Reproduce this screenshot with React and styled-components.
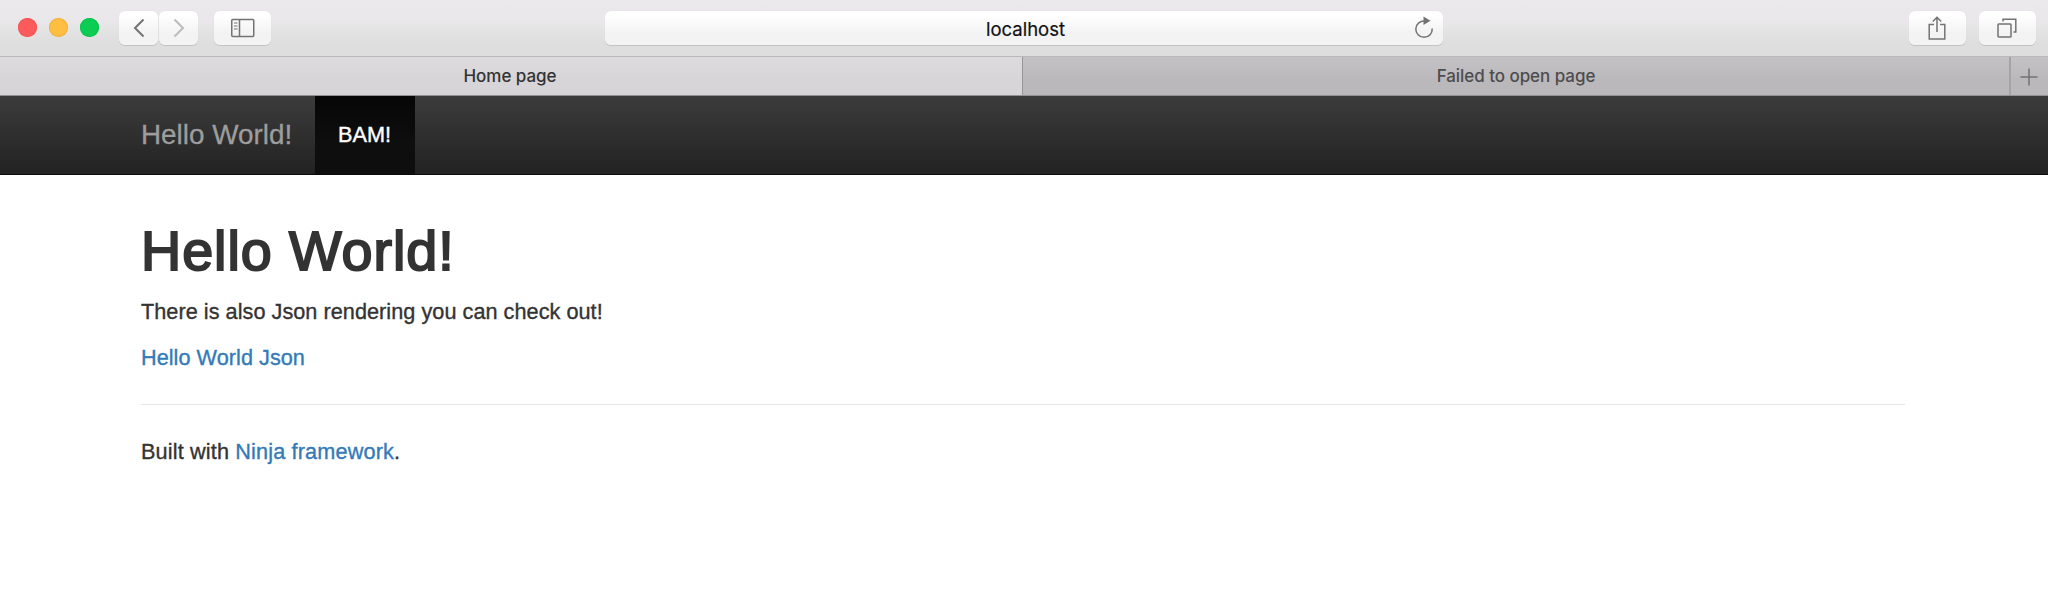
import React from 'react';
import styled, { createGlobalStyle } from 'styled-components';

const GlobalStyle = createGlobalStyle`
  *, *::before, *::after { box-sizing: border-box; }
  body {
    margin: 0;
    background: #fff;
    color: #333;
    font-family: "Liberation Sans", Arial, sans-serif;
    font-size: 21.66px;
  }
`;

const Toolbar = styled.header`
  display: flex;
  align-items: flex-start;
  height: 57px;
  padding: 11px 12px 0 18px;
  background: linear-gradient(#ebe9eb 0%, #e9e7e9 38%, #dedede 78%, #dedede 100%);
  border-bottom: 1px solid #b9b8ba;
`;

const TrafficLights = styled.div`
  display: flex;
  gap: 12px;
  width: 101px;
  padding-top: 7px;
`;

const Light = styled.span`
  width: 19px;
  height: 19px;
  border-radius: 50%;
  background: ${(p) => p.$color};
  box-shadow: inset 0 0 0 1px ${(p) => p.$edge};
`;

const ToolButton = styled.button`
  display: flex;
  align-items: center;
  justify-content: center;
  width: ${(p) => p.$width}px;
  height: 34px;
  margin: 0 ${(p) => p.$after || 0}px 0 0;
  padding: 0 ${(p) => p.$nudge || 0}px 0 0;
  border: 0;
  border-radius: 6px;
  background: linear-gradient(#fff 10%, #f3f3f3 65%);
  box-shadow: 0 0 1px #d4d2d4, 0 1px 0.5px #c2c1c2;
  flex: none;
`;

const Address = styled.div`
  display: flex;
  align-items: center;
  width: 838px;
  height: 34px;
  margin: 0 auto 0 334px;
  padding: 0 8px 0 33px;
  border-radius: 6px;
  background: linear-gradient(#fff 10%, #f3f3f3 65%);
  box-shadow: 0 0 1px #d4d2d4, 0 1px 0.5px #c2c1c2;
  font: 400 18.5px/36px Inter, sans-serif;
  color: #111;
  -webkit-text-stroke: 0.2px;
`;

const Host = styled.span`
  flex: 1;
  height: 34px;
  text-align: center;
`;

const TabBar = styled.nav`
  display: flex;
  height: 39px;
  border-bottom: 1px solid #929194;
  background: #bbb9bc;
`;

const Tab = styled.div`
  width: ${(p) => p.$width}px;
  padding-right: ${(p) => p.$trim || 0}px;
  background: ${(p) => (p.$active ? 'linear-gradient(#dddbde, #d7d5d8 60%)' : 'linear-gradient(#c4c2c5, #bab8bb 60%)')};
  border-right: ${(p) => (p.$active ? 1 : 2)}px solid ${(p) => (p.$active ? '#979699' : '#a5a3a6')};
  text-align: center;
  font: 500 17px/38px Inter, sans-serif;
  letter-spacing: -0.05px;
  color: ${(p) => (p.$active ? '#333' : '#4d4c4e')};
`;

const NewTab = styled.button`
  flex: 1;
  display: flex;
  align-items: center;
  justify-content: center;
  padding: 1px 2px 0 0;
  border: 0;
  background: linear-gradient(#c4c2c5, #bab8bb 60%);
`;

const Navbar = styled.nav`
  display: flex;
  height: 79px;
  padding-left: 141px;
  background: linear-gradient(#3c3c3c, #222);
  border-bottom: 1.5px solid #0b0b0b;
`;

const Brand = styled.a`
  width: 174px;
  font-size: 27.85px;
  line-height: 77px;
  color: #9d9d9d;
  white-space: nowrap;
  -webkit-text-stroke: 0.3px;
`;

const NavItem = styled.a`
  width: 100px;
  padding-right: 1px;
  text-align: center;
  line-height: 77px;
  color: #fff;
  background: linear-gradient(#060606, #0e0e0e 60%);
  -webkit-text-stroke: 0.4px;
`;

const Content = styled.main`
  width: 1764px;
  margin-left: 141px;
  padding-top: 45px;
`;

const Title = styled.h1`
  margin: 0 0 14px;
  font-weight: 400;
  font-size: 55.7px;
  line-height: 62px;
  letter-spacing: 0.95px;
  -webkit-text-stroke: 2px #333;
`;

const Text = styled.p`
  margin: 0 0 15px;
  line-height: 31px;
  letter-spacing: ${(p) => p.$tracking || 0.04}px;
  -webkit-text-stroke: 0.35px;
`;

const Link = styled.a`
  color: #337ab7;
`;

const Rule = styled.hr`
  height: 1px;
  margin: 31px 0;
  border: 0;
  background: #e5e5e5;
`;

const Icon = styled.svg`
  display: block;
  fill: none;
  stroke: ${(p) => p.$color || '#737373'};
  stroke-width: ${(p) => p.$stroke || 1.5};
`;

export default function App() {
  return (
    <>
      <GlobalStyle />
      <Toolbar>
        <TrafficLights>
          <Light $color="#fd5b5b" $edge="#f25656" />
          <Light $color="#febe42" $edge="#f2b340" />
          <Light $color="#0bcd53" $edge="#0cc24f" />
        </TrafficLights>
        <ToolButton $width={39} $after={1} aria-label="Back">
          <Icon width="12" height="20" viewBox="0 0 12 20" $stroke={2}><path d="M10.500 1.500 2 10l8.500 8.500" /></Icon>
        </ToolButton>
        <ToolButton $width={39} $after={16} aria-label="Forward">
          <Icon width="12" height="20" viewBox="0 0 12 20" $stroke={2} $color="#bcbcbc"><path d="M1.500 1.500 10 10l-8.500 8.500" /></Icon>
        </ToolButton>
        <ToolButton $width={57} aria-label="Sidebar">
          <Icon width="24" height="20" viewBox="0 0 24 20">
            <rect x="0.750" y="1.500" width="22" height="17" rx="1" />
            <path d="M8.500 1.500v17" />
            <path d="M3 5h3.500M3 8h3.500M3 11h3.500" strokeWidth="1" />
          </Icon>
        </ToolButton>
        <Address>
          <Host>localhost</Host>
          <Icon width="22" height="24" viewBox="0 0 22 24">
            <path d="M12 5A8.200 8.200 0 1 0 19.200 12.500" />
            <path d="M10.500 0.500 17.500 4.800l-7 4.200z" fill="#737373" stroke="none" />
          </Icon>
        </Address>
        <ToolButton $width={57} $after={13} $nudge={1} aria-label="Share">
          <Icon width="18" height="26" viewBox="0 0 18 26">
            <path d="M6 9.500H1.200V24h15.600V9.500H12M9 17V2.500M4.800 6.500 9 2.300l4.200 4.200" />
          </Icon>
        </ToolButton>
        <ToolButton $width={57} $nudge={1} aria-label="Show all tabs">
          <Icon width="20" height="20" viewBox="0 0 20 20">
            <rect x="1" y="6" width="13" height="13" rx="0.800" />
            <path d="M6 3.500V1.200h12.800V14H16.500" />
          </Icon>
        </ToolButton>
      </Toolbar>
      <TabBar>
        <Tab $active $width={1023} $trim={2}>Home page</Tab>
        <Tab $width={988}>Failed to open page</Tab>
        <NewTab aria-label="New tab">
          <Icon width="18" height="18" viewBox="0 0 18 18"><path d="M9 .5v17M.5 9h17" /></Icon>
        </NewTab>
      </TabBar>
      <Navbar>
        <Brand>Hello World!</Brand>
        <NavItem>BAM!</NavItem>
      </Navbar>
      <Content>
        <Title>Hello World!</Title>
        <Text>There is also Json rendering you can check out!</Text>
        <Text><Link>Hello World Json</Link></Text>
        <Rule />
        <Text $tracking={0.15}>Built with <Link>Ninja framework</Link>.</Text>
      </Content>
    </>
  );
}
